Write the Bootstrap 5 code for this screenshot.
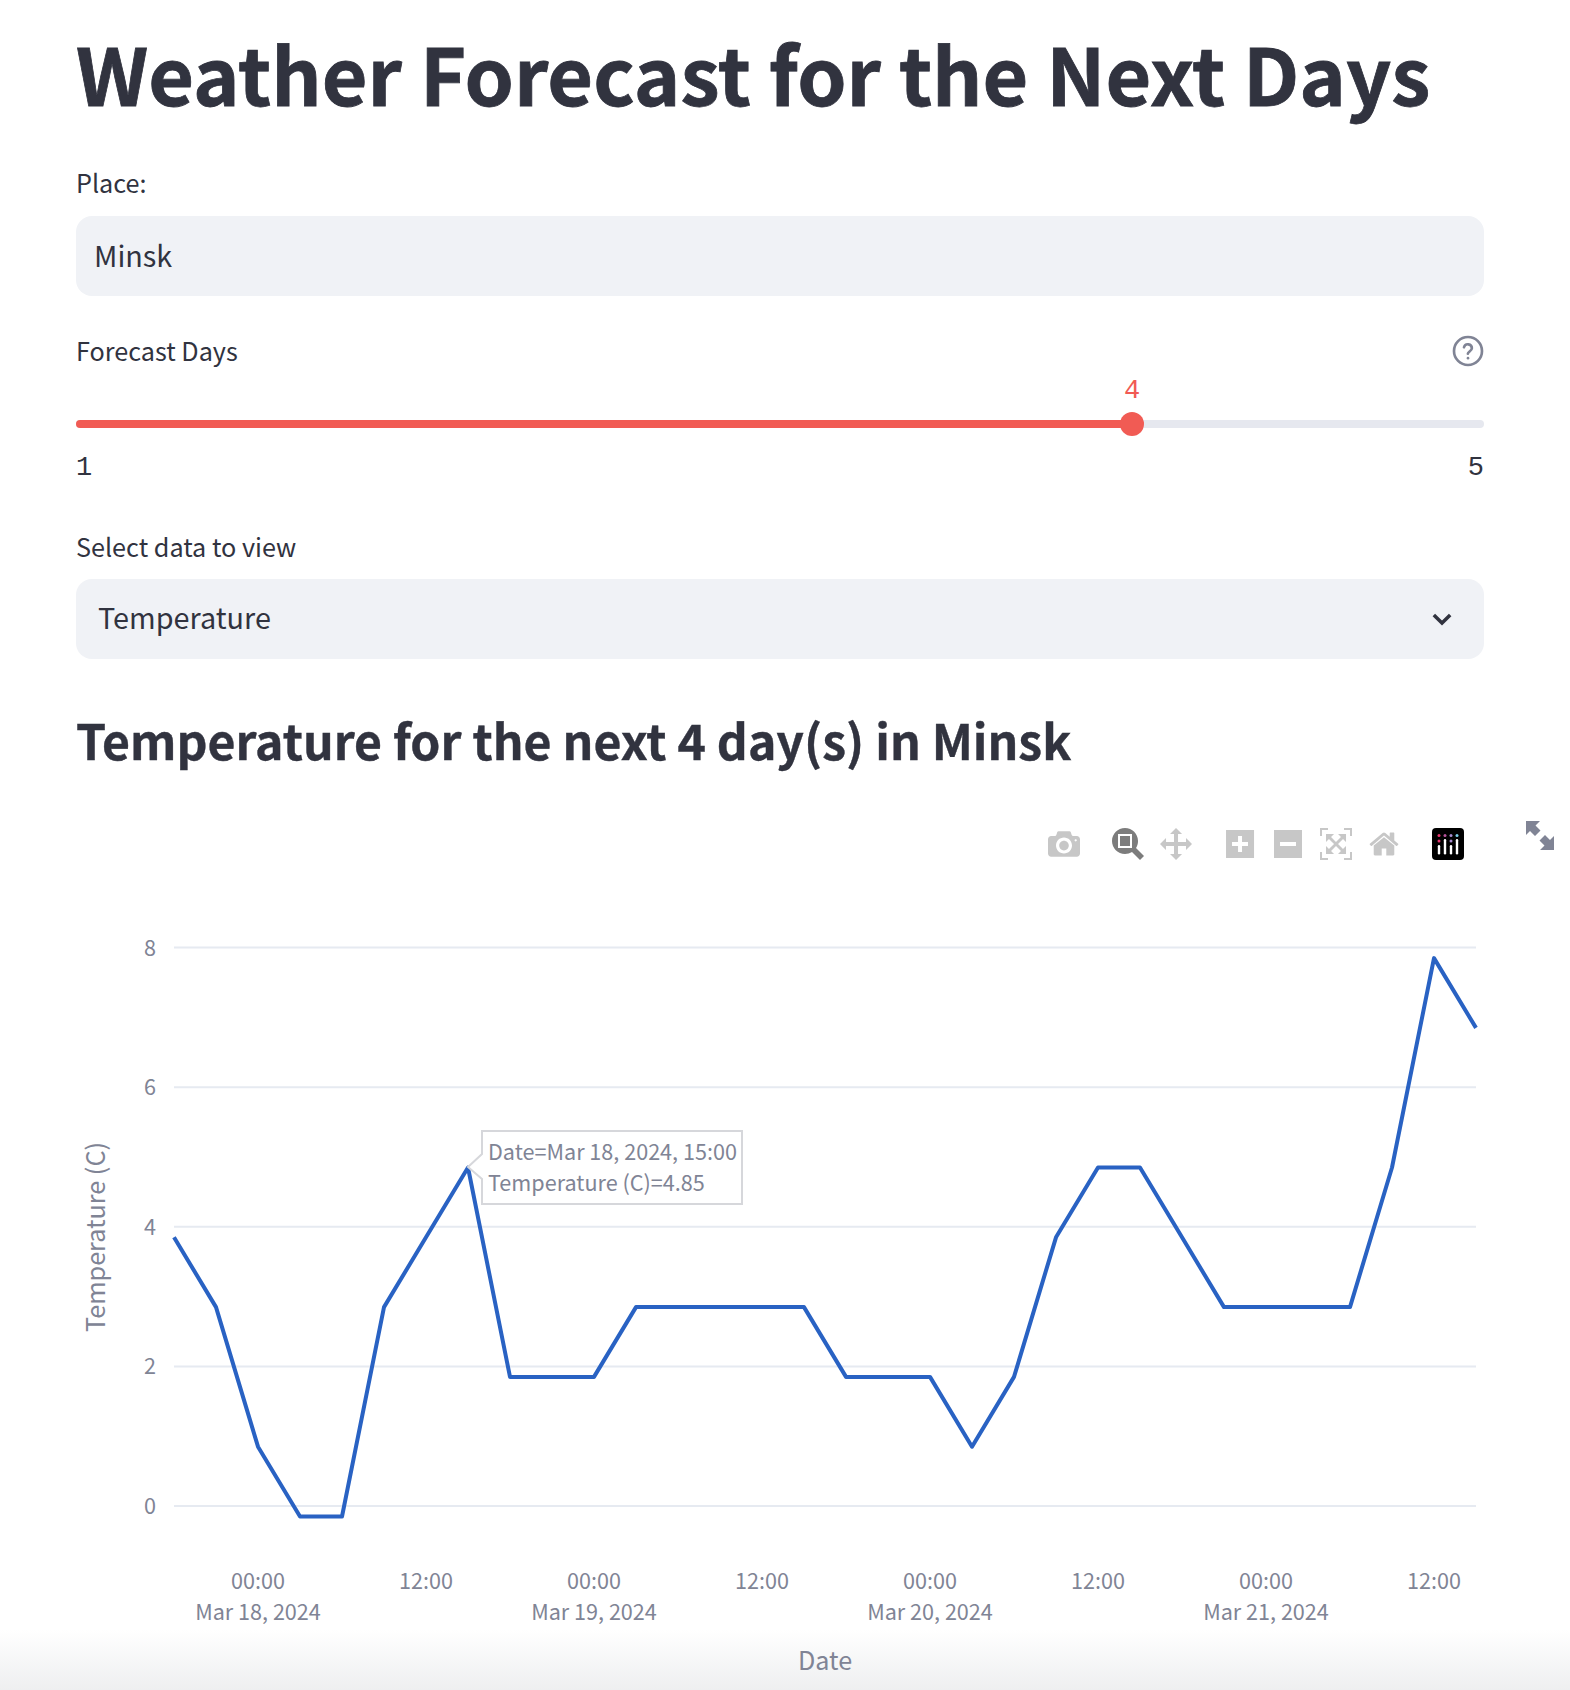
<!DOCTYPE html>
<html lang="en">
<head>
  <meta charset="UTF-8" />
  <meta name="viewport" content="width=device-width, initial-scale=1.0"/>
  <title>Weather Forecast</title>
  <link href="https://cdn.jsdelivr.net/npm/bootstrap@5.3.3/dist/css/bootstrap.min.css" rel="stylesheet"/>
  <style>
    html, body {
      height: 1690px;
      overflow: hidden;
    }

    body {
      background: linear-gradient(to bottom, #ffffff 1630px, #eeeff0 1690px);
      color: #31333f;
      font-family: "Noto Sans CJK SC", "Liberation Sans", sans-serif;
    }

    .app-main {
      padding: 0 86px 0 76px;
    }

    .app-title {
      color: #31333f;
      font-size: 78.900px;
      font-weight: 700;
      line-height: 110px;
      margin: 17px 0 0;
      white-space: nowrap;
      -webkit-text-stroke: 0.8px #31333f;
    }

    .field-label {
      color: #31333f;
      font-size: 25.200px;
      line-height: 40px;
      margin: 0;
    }

    .place-label { margin-top: 35px; margin-bottom: 14px; }

    .field-box, .field-box:focus {
      background-color: #f0f2f6;
      border: none;
      border-radius: 16px;
      box-shadow: none;
      color: #31333f;
      font-size: 28.800px;
      height: 80px;
      line-height: 48px;
      padding: 14px 18px 18px;
    }

    .days-row { margin-top: 36px; }
    .days-row .field-label { margin-top: -2px; }

    .slider-wrap {
      height: 8px;
      margin-top: 50px;
      position: relative;
    }

    .slider-track {
      background-color: #e6e8ef;
      border-radius: 4px;
      height: 8px;
    }

    .slider-track .progress-bar { background-color: #f15b54; }

    .slider-thumb {
      background-color: #f15b54;
      border-radius: 50%;
      height: 24px;
      left: 75%;
      position: absolute;
      top: -8px;
      transform: translateX(-50%);
      width: 24px;
    }

    .slider-value {
      color: #f15b54;
      font-family: "Liberation Mono", monospace;
      font-size: 27px;
      left: 75%;
      line-height: 30px;
      position: absolute;
      top: -44px;
      transform: translateX(-50%);
    }

    .slider-ticks {
      font-family: "Liberation Mono", monospace;
      font-size: 27px;
      line-height: 30px;
      margin-top: 25px;
    }

    .select-label { margin-top: 43px; margin-bottom: 13px; }

    .select-box, .select-box:focus {
      background-image: url("data:image/svg+xml,%3csvg xmlns='http://www.w3.org/2000/svg' viewBox='0 0 24 24'%3e%3cpath fill='none' stroke='%2331333f' stroke-width='3' d='M5 8.500l7 7 7-7'/%3e%3c/svg%3e");
      background-position: right 28px center;
      background-size: 28px 28px;
      padding-left: 22px;
    }

    .sub-title {
      color: #31333f;
      font-size: 48.200px;
      font-weight: 700;
      line-height: 66px;
      margin: 47px 0 0;
      -webkit-text-stroke: 0.4px #31333f;
    }

    .chart-wrap {
      margin-top: 56px;
      position: relative;
    }

    .mode-bar {
      height: 50px;
      padding-right: 20px;
    }

    .mode-bar svg { height: 32px; width: 32px; }
    .mode-bar path { fill: #c7c7c7; }
    .mode-bar .is-active path { fill: #7c7c7c; }

    .mode-group { margin-left: 32px; }

    .full-btn {
      height: 29px;
      position: absolute;
      right: -70px;
      top: -7px;
      width: 28px;
    }

    .chart-svg { display: block; }
    .grid-line { stroke: #e6eaf1; stroke-width: 2; }
    .temp-line { fill: none; stroke: #2962c3; stroke-width: 4; stroke-linejoin: round; }
    .chart-text { fill: #808495; font-size: 21.600px; }
    .axis-title { fill: #808495; font-size: 25.200px; }
    .hover-box { fill: #ffffff; stroke: #d6d7db; stroke-width: 2; }
  </style>
</head>
<body>

  <div class="app-main">
    <h1 class="app-title">Weather Forecast for the Next Days</h1>

    <label class="field-label place-label d-block" for="place">Place:</label>
    <input type="text" class="form-control field-box" id="place" value="Minsk">

    <div class="d-flex justify-content-between align-items-center days-row">
      <span class="field-label">Forecast Days</span>
      <svg width="32" height="32" viewBox="0 0 24 24" fill="none" stroke="#808495" stroke-width="2" stroke-linecap="round">
        <circle cx="12" cy="12" r="10.500"/>
        <path d="M9 9.200a3 3 0 0 1 5.900.8c0 2-3 2.600-3 4"/>
        <path d="M12 17.300v.1"/>
      </svg>
    </div>

    <div class="slider-wrap">
      <div class="slider-value">4</div>
      <div class="progress slider-track">
        <div class="progress-bar" style="width: 75%"></div>
      </div>
      <div class="slider-thumb"></div>
    </div>
    <div class="d-flex justify-content-between slider-ticks">
      <span>1</span>
      <span>5</span>
    </div>

    <label class="field-label select-label d-block" for="view">Select data to view</label>
    <select class="form-select field-box select-box" id="view">
      <option>Temperature</option>
      <option>Sky</option>
    </select>

    <h2 class="sub-title">Temperature for the next 4 day(s) in Minsk</h2>

    <div class="chart-wrap">
      <div class="mode-bar d-flex justify-content-end">
        <div class="d-flex gap-3 mode-group">
          <svg viewBox="0 0 1000 1000"><path transform="matrix(1 0 0 -1 0 850)" d="m500 450c-83 0-150-67-150-150 0-83 67-150 150-150 83 0 150 67 150 150 0 83-67 150-150 150z m400 150h-120c-16 0-34 13-39 29l-31 93c-6 15-23 28-40 28h-340c-16 0-34-13-39-28l-31-94c-6-15-23-28-40-28h-120c-55 0-100-45-100-100v-450c0-55 45-100 100-100h800c55 0 100 45 100 100v450c0 55-45 100-100 100z m-400-550c-138 0-250 112-250 250 0 138 112 250 250 250 138 0 250-112 250-250 0-138-112-250-250-250z m365 380c-19 0-35 16-35 35 0 19 16 35 35 35 19 0 35-16 35-35 0-19-16-35-35-35z"/></svg>
        </div>
        <div class="d-flex gap-3 mode-group">
          <svg class="is-active" viewBox="0 0 1000 1000"><path transform="matrix(1 0 0 -1 0 850)" d="m1000-25l-250 251c40 63 63 138 63 218 0 224-182 406-407 406-224 0-406-182-406-406s183-406 407-406c80 0 155 22 218 62l250-250 125 125z m-812 250l0 438 437 0 0-438-437 0z m62 375l313 0 0-312-313 0 0 312z"/></svg>
          <svg viewBox="0 0 1000 1000"><path transform="matrix(1 0 0 -1 0 850)" d="m1000 350l-187 188 0-125-250 0 0 250 125 0-188 187-187-187 125 0 0-250-250 0 0 125-188-188 186-187 0 125 252 0 0-250-125 0 187-188 188 188-125 0 0 250 250 0 0-126 187 188z"/></svg>
        </div>
        <div class="d-flex gap-3 mode-group">
          <svg viewBox="0 0 875 1000"><path transform="matrix(1 0 0 -1 0 850)" d="m1 787l0-875 875 0 0 875-875 0z m687-500l-187 0 0-187-125 0 0 187-188 0 0 125 188 0 0 187 125 0 0-187 187 0 0-125z"/></svg>
          <svg viewBox="0 0 875 1000"><path transform="matrix(1 0 0 -1 0 850)" d="m0 788l0-876 875 0 0 876-875 0z m688-500l-500 0 0 125 500 0 0-125z"/></svg>
          <svg viewBox="0 0 1000 1000"><path transform="matrix(1 0 0 -1 0 850)" d="m250 850l-187 0-63 0 0-62 0-188 63 0 0 188 187 0 0 62z m688 0l-188 0 0-62 188 0 0-188 62 0 0 188 0 62-62 0z m-875-938l0 188-63 0 0-188 0-62 63 0 187 0 0 62-187 0z m875 188l0-188-188 0 0-62 188 0 62 0 0 62 0 188-62 0z m-125 188l-1 0-93-94-156 156 156 156 92-93 2 0 0 250-250 0 0-2 93-92-156-156-156 156 94 92 0 2-250 0 0-250 0 0 93 93 157-156-157-156-93 94 0 0 0-250 250 0 0 0-94 93 156 157 156-157-93-93 0 0 250 0 0 250z"/></svg>
          <svg viewBox="0 0 928.600 1000"><path transform="matrix(1 0 0 -1 0 850)" d="m786 296v-267q0-15-11-26t-25-10h-214v214h-143v-214h-214q-15 0-25 10t-11 26v267q0 1 0 2t0 2l321 264 321-264q1-1 1-4z m124 39l-34-41q-5-5-12-6h-2q-7 0-12 3l-386 322-386-322q-7-4-13-4-7 2-12 7l-35 41q-4 5-3 13t6 12l401 334q18 15 42 15t43-15l136-114v109q0 8 5 13t13 5h107q8 0 13-5t5-13v-227l122-102q5-5 6-12t-4-13z"/></svg>
        </div>
        <div class="d-flex gap-3 mode-group">
          <svg viewBox="0 0 32 32">
            <rect width="32" height="32" rx="4" fill="#000"/>
            <circle cx="7" cy="7.500" r="1.500" fill="#e8356f"/>
            <circle cx="13" cy="7.500" r="1.500" fill="#b5539a"/>
            <circle cx="19" cy="7.500" r="1.500" fill="#a78ccf"/>
            <circle cx="25" cy="7.500" r="1.500" fill="#79cfe8"/>
            <circle cx="7" cy="13" r="1.500" fill="#e8356f"/>
            <circle cx="19" cy="13" r="1.500" fill="#a78ccf"/>
            <rect x="5.800" y="17" width="2.400" height="9.500" rx="1.200" fill="#fff"/>
            <rect x="11.800" y="11" width="2.400" height="15.500" rx="1.200" fill="#fff"/>
            <rect x="17.800" y="17" width="2.400" height="9.500" rx="1.200" fill="#fff"/>
            <rect x="23.800" y="11" width="2.400" height="15.500" rx="1.200" fill="#fff"/>
          </svg>
        </div>
      </div>

      <svg class="full-btn" viewBox="0 0 28 29">
        <path fill="#808495" d="M0 0h14l-4.500 4.500 5 5-5.500 5.500-5-5L0 14z M28 29H14l4.500-4.500-5-5 5.500-5.500 5 5L28 15z"/>
      </svg>

      <svg class="chart-svg" id="chart" width="1408" height="810" viewBox="76 880 1408 810"></svg>
    </div>
  </div>

<script>
  const temps = [3.85, 2.85, 0.85, -0.15, -0.15, 2.85, 3.85, 4.85, 1.85, 1.85, 1.85, 2.85, 2.85, 2.85, 2.85, 2.85,
                 1.85, 1.85, 1.85, 0.85, 1.85, 3.85, 4.85, 4.85, 3.85, 2.85, 2.85, 2.85, 2.85, 4.85, 7.85, 6.85];

  const xAt = (i) => 174 + i * 42;
  const yAt = (v) => 1508 - v * 69.8;

  let svg = "";

  for (const v of [0, 2, 4, 6, 8]) {
    svg += `<line class="grid-line" x1="174" x2="1476" y1="${yAt(v)}" y2="${yAt(v)}"/>`;
    svg += `<text class="chart-text" x="156" y="${yAt(v) + 8}" text-anchor="end">${v}</text>`;
  }

  const ticks = [
    [2, "00:00", "Mar 18, 2024"], [6, "12:00"],
    [10, "00:00", "Mar 19, 2024"], [14, "12:00"],
    [18, "00:00", "Mar 20, 2024"], [22, "12:00"],
    [26, "00:00", "Mar 21, 2024"], [30, "12:00"]
  ];
  for (const [i, time, day] of ticks) {
    svg += `<text class="chart-text" x="${xAt(i)}" y="1591" text-anchor="middle">${time}</text>`;
    if (day) svg += `<text class="chart-text" x="${xAt(i)}" y="1622" text-anchor="middle">${day}</text>`;
  }

  svg += `<text class="axis-title" x="825" y="1672" text-anchor="middle">Date</text>`;
  svg += `<text class="axis-title" x="105" y="1239" text-anchor="middle" transform="rotate(-90 105 1239)">Temperature (C)</text>`;

  const points = temps.map((v, i) => `${xAt(i)},${yAt(v).toFixed(1)}`).join(" ");
  svg += `<polyline class="temp-line" points="${points}"/>`;

  // hover label on the 15:00 point
  svg += `<path class="hover-box" d="M468 1169 L482 1156 V1133 H742 V1206 H482 V1181 Z"/>`;
  svg += `<text class="chart-text" x="488" y="1162">Date=Mar 18, 2024, 15:00</text>`;
  svg += `<text class="chart-text" x="488" y="1193">Temperature (C)=4.85</text>`;

  document.getElementById("chart").innerHTML = svg;
</script>
<script src="https://cdn.jsdelivr.net/npm/bootstrap@5.3.3/dist/js/bootstrap.bundle.min.js"></script>
</body>
</html>
